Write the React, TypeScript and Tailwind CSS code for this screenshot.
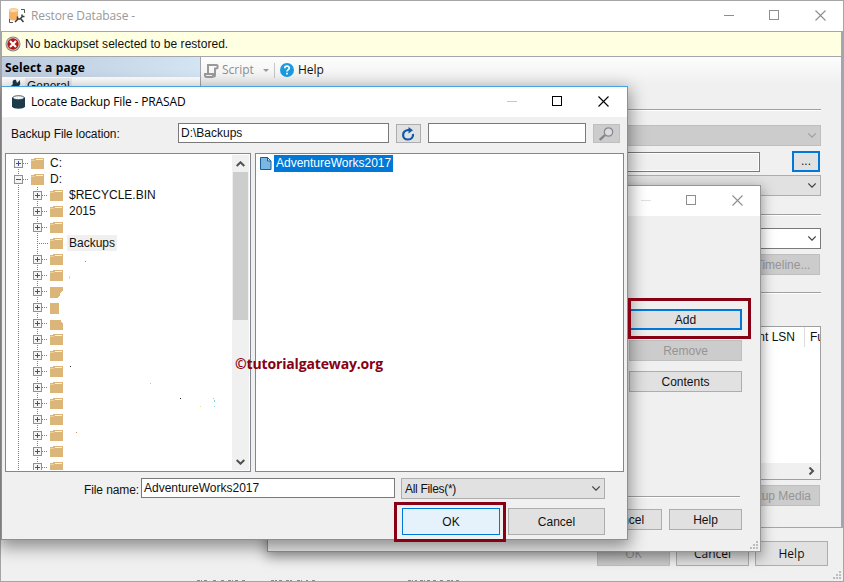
import type { ReactNode } from 'react'
import clsx from 'clsx'

const SANS = "font-['Liberation_Sans',sans-serif]"
const UI = "font-['Open_Sans',sans-serif]"

const folders = [
  { name: '$RECYCLE.BIN' },
  { name: '2015' },
  { name: '' },
  { name: 'Backups', selected: true, leaf: true },
  { name: '' },
  { name: '' },
  { name: '', shape: 'M50 4h13v3l-3 3v2l-2 3h-8z' },
  { name: '', shape: 'M50 4h9v11h-9z' },
  { name: '', shape: 'M50 5h11v2l2 2v6h-13z' },
  { name: '' },
  { name: '' },
  { name: '' },
  { name: '' },
  { name: '' },
  { name: '' },
  { name: '' },
  { name: '' },
  { name: '' },
]

export default function App() {
  return (
    <div className={clsx('relative w-[844px] h-[582px] overflow-hidden text-xs leading-4 text-[#111]', SANS)}>
      <RestoreWindow />
      <DeviceDialog />
      <LocateDialog />
      <div className="absolute left-[628px] top-[298px] w-[123px] h-[41px] border-3 border-[#870014]" />
      <div className="absolute left-[394px] top-[502px] w-[112px] h-[40px] border-3 border-[#870014]" />
      <div className="absolute left-[235px] top-[354px] whitespace-nowrap font-['Open_Sans',sans-serif] font-bold text-[14px] leading-5 tracking-[-0.15px] text-[#870014]">
        ©tutorialgateway.org
      </div>
    </div>
  )
}

function RestoreWindow() {
  return (
    <div className="w-[844px] h-[582px] flex flex-col bg-[#f0f0f0] border border-[#a5a5a8]">
      <div className="h-[31px] shrink-0 flex items-center bg-white border-b border-[#a5a5ad]">
        <RestoreIcon />
        <span className={clsx('ml-[5px] text-[#999] tracking-[-0.1px]', UI)}>Restore Database -</span>
        <WindowButtons className="ml-auto mr-[17px] mb-[1px]" color="#8e8e8e" minColor="#8e8e8e" />
      </div>
      <div className="h-[496px] shrink-0 flex flex-col border-l border-r-2 border-b border-[#a5a5ad]">
        <div className="h-[25px] shrink-0 flex items-center bg-[#ffffe1] border-b border-[#a5a5ad]">
          <ErrorIcon />
          <span className="ml-[4px] tracking-[0.03px]">No backupset selected to be restored.</span>
        </div>
        <div className="flex flex-1 min-h-0">
          <div className="w-[199px] shrink-0 bg-white border-r border-[#a5a5ad]">
            <div className="h-5 pl-[3px] pt-[3px] bg-gradient-to-r from-[#bccbdd] to-[#d3e4f2] font-['Open_Sans',sans-serif] font-bold tracking-[0.15px] text-black">
              Select a page
            </div>
            <div className="flex h-5 pl-[7px] pt-[1px]">
              <WrenchIcon />
              <span className="ml-[4px] h-4 px-[2px] bg-[#f0f0f0]">General</span>
            </div>
          </div>
          <div className="flex-1 min-w-0 flex flex-col">
            <div className={clsx('h-[26px] shrink-0 flex items-center px-[3px] bg-gradient-to-b from-[#fdfdfd] to-[#f0f0f0]', UI)}>
              <ScriptIcon />
              <span className="ml-[3px] text-[#8e8e8e]">Script</span>
              <svg width="6" height="3" className="ml-[9px]">
                <path d="M0 0h6L3 3z" fill="#999" />
              </svg>
              <div className="ml-[5px] mr-[5px] w-px h-[15px] bg-[#c5c5c5]" />
              <HelpIcon />
              <span className="ml-[4px]">Help</span>
            </div>
            <RestoreForm />
          </div>
        </div>
      </div>
      <div className="relative flex-1 flex justify-end items-start gap-[6px] pt-[13px] pr-[15px] text-[12px]">
        <Button className={clsx('w-[73px] h-[25px]', UI)} disabled>OK</Button>
        <Button className={clsx('w-[73px] h-[25px]', UI)}>Cancel</Button>
        <Button className={clsx('w-[73px] h-[25px]', UI)}>Help</Button>
        <Grip className="absolute right-[2px] bottom-[2px]" />
        <svg width="320" height="2" className="absolute left-[194px] bottom-0" stroke="#8c8c8c">
          <path
            d="M2 1.5h5m2 0h3m6 0h4m4 0h3m4 0h5m2 0h3m4 0h3M76 1.5h6m2 0h4m3 0h6m5 0h5m4 0h2m4 0h4M213 1.5h5m2 0h2m3 0h5m2 0h4m2 0h4m3 0h4m3 0h6m3 0h4"
            strokeDasharray="3 1"
            fill="none"
          />
        </svg>
      </div>
    </div>
  )
}

function RestoreForm() {
  return (
    <div className="flex flex-col items-end pr-[20px] pt-[26px]">
      <Rule className="w-[600px]" />
      <div className="mt-[14px] w-[600px] h-[21px] flex items-center justify-end pr-[4px] bg-[#ccc] border border-[#bfbfbf]">
        <Chevron color="#a0a0a0" />
      </div>
      <div className="mt-[5px] flex items-center pr-px">
        <div className="w-[540px] h-[20px] bg-[#f0f0f0] border border-[#7a7a7a] shadow-[inset_0_0_0_1px_#fff]" />
        <div className="ml-[32px] w-[28px] h-[21px] flex items-end justify-center pb-[1px] bg-[#e1e1e1] border-2 border-[#0078d7]">
          ...
        </div>
      </div>
      <div className="mt-[3px] w-[600px] h-[21px] flex items-center justify-end pr-[4px] bg-[#e1e1e1] border border-[#adadad]">
        <Chevron />
      </div>
      <Rule className="mt-[18px] w-[600px]" />
      <div className="mt-[12px] w-[600px] h-[21px] flex items-center justify-end pr-[4px] bg-white border border-[#7a7a7a]">
        <Chevron />
      </div>
      <Button className="mt-[5px] mr-px w-[74px] h-[21px]" disabled>Timeline...</Button>
      <Rule className="mt-[17px] w-[600px]" />
      <div className="mt-[32px] w-[600px] h-[154px] flex flex-col bg-white border border-[#a0a0a0]">
        <div className="h-[20px] flex justify-end text-[12px]">
          <span className="pr-[9px] pt-px border-r border-[#ddd] leading-[18px]">Checkpoint LSN</span>
          <span className="w-[15px] pl-[5px] pt-px leading-[18px] overflow-hidden whitespace-nowrap">Full LSN</span>
        </div>
        <div className="flex-1" />
        <div className="h-[16px] flex items-center justify-end pr-[5px] bg-[#f0f0f0]">
          <svg width="7" height="8" fill="none" stroke="#505050" strokeWidth="2">
            <path d="M1.5 .5 5 4 1.5 7.5" />
          </svg>
        </div>
      </div>
      <Button className="mt-[5px] mr-px w-[136px] h-[21px] justify-end! pr-[8px]" disabled>Verify Backup Media</Button>
    </div>
  )
}

function DeviceDialog() {
  return (
    <div className="absolute left-[267px] top-[185px] w-[494px] h-[367px] flex flex-col bg-[#f0f0f0] border border-[#959595] shadow-[0_4px_12px_1px_rgba(0,0,0,0.38)]">
      <div className="h-[30px] shrink-0 flex items-center justify-end pr-[17px] bg-white">
        <WindowButtons className="mb-[1px]" color="#8e8e8e" minColor="#e0e0e0" />
      </div>
      <div className="flex flex-col items-end pt-[93px] pr-[18px] gap-[10px]">
        <div className="w-[113px] h-[21px] flex items-center justify-center bg-[#e1e1e1] border-2 border-[#0078d7]">
          Add
        </div>
        <Button className="w-[113px] h-[21px]" disabled>Remove</Button>
        <Button className="w-[113px] h-[21px]">Contents</Button>
      </div>
      <div className="mt-auto pb-[21px] pr-[18px] flex flex-col items-end">
        <Rule className="w-[440px] mr-[2px]" />
        <div className="mt-[11px] flex gap-[7px]">
          <Button className="w-[73px] h-[21px]">Cancel</Button>
          <Button className="w-[73px] h-[21px]">Help</Button>
        </div>
      </div>
      <Grip className="absolute right-[2px] bottom-[2px]" />
    </div>
  )
}

function LocateDialog() {
  return (
    <div className="absolute left-px top-[86px] w-[627px] h-[454px] flex flex-col bg-[#f0f0f0] border border-[#46a3e0] shadow-[0_5px_16px_2px_rgba(0,0,0,0.42)]">
      <div className="h-[30px] shrink-0 flex items-center bg-white">
        <DatabaseIcon />
        <span className={clsx('ml-[6px] tracking-[-0.15px] text-black', UI)}>Locate Backup File - PRASAD</span>
        <WindowButtons className="ml-auto mr-[18px] mb-[1px]" color="#000" minColor="#c8c8c8" />
      </div>

      <div className="h-[36px] shrink-0 flex items-start pt-[6px] pl-[9px]">
        <span className="w-[167px] pt-[3px] tracking-[-0.1px]">Backup File location:</span>
        <div className="w-[211px] h-[20px] px-[2px] bg-white border border-[#7a7a7a] leading-[18px]">D:\Backups</div>
        <div className="ml-[7px] mt-px w-[25px] h-[19px] flex items-center justify-center bg-[#e1e1e1] border border-[#adadad]">
          <RefreshIcon />
        </div>
        <div className="ml-[7px] w-[158px] h-[20px] bg-white border border-[#7a7a7a]" />
        <div className="ml-[7px] mt-px w-[27px] h-[19px] flex items-center justify-center bg-[#ccc] border border-[#bfbfbf]">
          <SearchIcon />
        </div>
      </div>

      <div className="flex h-[319px] shrink-0 pl-[3px] gap-[4px]">
        <div className="w-[246px] flex bg-white border border-[#828790] py-px">
          <FolderTree />
          <TreeScrollbar />
        </div>
        <div className="w-[369px] flex items-start bg-white border border-[#828790] pt-px pl-[3px]">
          <FileIcon />
          <span className="ml-[2px] h-[17px] px-[2px] bg-[#0078d7] text-white leading-[17px]">AdventureWorks2017</span>
        </div>
      </div>

      <div className="flex items-start pt-[6px] pl-[82px]">
        <span className="w-[57px] pt-[4px] tracking-[-0.1px]">File name:</span>
        <div className="w-[254px] h-[20px] px-[2px] bg-white border border-[#7a7a7a] leading-[18px]">AdventureWorks2017</div>
        <div className="ml-[6px] w-[204px] h-[21px] flex items-center justify-between pl-[3px] pr-[4px] bg-[#e1e1e1] border border-[#adadad]">
          <span className="tracking-[-0.3px]">All Files(*)</span>
          <Chevron />
        </div>
      </div>

      <div className="mt-[9px] pr-[22px] flex justify-end gap-[8px]">
        <div className="w-[98px] h-[27px] flex items-center justify-center bg-[#e5f1fb] border border-[#0078d7]">OK</div>
        <Button className="w-[97px] h-[27px]">Cancel</Button>
      </div>
    </div>
  )
}

function FolderTree() {
  return (
    <div className="relative flex-1 overflow-hidden">
      <TreeRow name="C:" root first />
      <TreeRow name="D:" root open />
      {folders.map((folder, index) => (
        <TreeRow key={index} {...folder} />
      ))}
      {/* leftover specks in the blanked out names */}
      <svg width="226" height="315" className="absolute left-0 top-0">
        <path d="M79 106h1v1h-1zM70 277h1v1h-1z" fill="#c98a4b" />
        <path d="M63 121h1v3h-1zM194 251h1v1h-1z" fill="#f0d890" />
        <path d="M64 211h1v1h-1zM174 243h1v1h-1z" fill="#222" />
        <path d="M144 228h1v1h-1zM207 243h1v1h-1zM208 245h1v2h-1zM208 251h1v1h-1z" fill="#7fd6ea" />
      </svg>
    </div>
  )
}

type TreeRowProps = {
  name: string
  root?: boolean
  first?: boolean
  open?: boolean
  leaf?: boolean
  selected?: boolean
  shape?: string
}

function TreeRow({ name, root, first, open, leaf, selected, shape }: TreeRowProps) {
  const offset = root ? 0 : 19
  return (
    <div className="flex h-4">
      <svg width={root ? 41 : 60} height="16" viewBox={root ? '6 0 41 16' : '6 0 60 16'} className="shrink-0" shapeRendering="crispEdges">
        <g stroke="#808080" strokeDasharray="1 1">
          <path d={first ? 'M18.5 8v8' : 'M18.5 0v16'} />
          {!root && <path d="M37.5 0v16" />}
          <path d={`M${(leaf ? 18 : 23) + offset} 8.5H${29 + offset}`} />
        </g>
        {!leaf && (
          <g transform={`translate(${offset} 0)`}>
            <rect x="14.5" y="4.5" width="8" height="8" fill="#f4f4f4" stroke="#919191" />
            <path d={open ? 'M16 8.5h5' : 'M16 8.5h5M18.5 6v5'} stroke="#3355a8" />
          </g>
        )}
        {shape ? (
          <path d={shape} fill="#dcb679" />
        ) : (
          <g transform={`translate(${offset} 0)`}>
            <path d="M31 4h3V3h10v11H31z" fill="#dcb679" />
            <path d="M36 4.5h7" stroke="#fbf2df" />
            <path d="M31 5.5h4" stroke="#ead09f" />
          </g>
        )}
      </svg>
      {name && (
        <span className={clsx('ml-px px-[2px] whitespace-nowrap', selected && 'bg-[#f0f0f0]')}>{name}</span>
      )}
    </div>
  )
}

function TreeScrollbar() {
  return (
    <div className="w-[17px] flex flex-col items-center bg-[#f0f0f0] mr-px">
      <div className="h-[17px] flex items-center">
        <svg width="9" height="6" fill="none" stroke="#505050" strokeWidth="2">
          <path d="M.7 5 4.5 1.3 8.3 5" />
        </svg>
      </div>
      <div className="w-[15px] h-[148px] bg-[#cdcdcd]" />
      <div className="flex-1" />
      <div className="h-[17px] flex items-center">
        <svg width="9" height="6" fill="none" stroke="#505050" strokeWidth="2">
          <path d="M.7 1 4.5 4.7 8.3 1" />
        </svg>
      </div>
    </div>
  )
}

function Button({ children, className, disabled }: { children: ReactNode; className?: string; disabled?: boolean }) {
  return (
    <div
      className={clsx(
        'flex items-center justify-center whitespace-nowrap border',
        disabled ? 'bg-[#ccc] border-[#bfbfbf] text-[#959595]' : 'bg-[#e1e1e1] border-[#adadad]',
        className,
      )}
    >
      {children}
    </div>
  )
}

function Rule({ className }: { className?: string }) {
  return <div className={clsx('h-[2px] shrink-0 bg-white border-t border-[#a0a0a0]', className)} />
}

function WindowButtons({ className, color, minColor }: { className?: string; color: string; minColor: string }) {
  return (
    <svg width="102" height="11" viewBox="0 0 102 11" className={className} fill="none" stroke={color}>
      <path d="M0 5.5h10" stroke={minColor} />
      <rect x="45.5" y=".5" width="9" height="9" />
      <path d="m91.5.5 10 10m0-10-10 10" strokeWidth="1.1" />
    </svg>
  )
}

function Chevron({ color = '#444' }: { color?: string }) {
  return (
    <svg width="8" height="5" viewBox="0 0 8 5" fill="none" stroke={color} strokeWidth="1.2">
      <path d="M.3.5 4 4.2 7.7.5" />
    </svg>
  )
}

function Grip({ className }: { className?: string }) {
  return (
    <svg width="8" height="8" className={className} fill="#bdbdbd">
      <path d="M6 0h2v2H6zM3 3h2v2H3zM6 3h2v2H6zM0 6h2v2H0zM3 6h2v2H3zM6 6h2v2H6z" />
    </svg>
  )
}

function RestoreIcon() {
  return (
    <svg width="17" height="16" viewBox="0 0 17 16" className="ml-[8px]" fill="none">
      <path d="M0 2.5v8C1 13 8 13 9 10.500v-8z" fill="#f6b162" />
      <ellipse cx="4.500" cy="2.500" rx="4.500" ry="2" fill="#fbdcae" stroke="#f6b162" strokeWidth=".7" />
      <path d="M12 1.500h3.500V5M.5 11v3.500H4" stroke="#555" />
      <path d="m6 14 3-3M8.500 8.500v2.500h2.500M11.500 10.500l3 3.500M11 11l3-3M13 6.500v2h2.500" stroke="#3b3b3b" strokeWidth="1.500" />
    </svg>
  )
}

function ErrorIcon() {
  return (
    <svg width="16" height="16" viewBox="0 0 16 16" className="ml-[3px]">
      <circle cx="8" cy="8" r="7.500" fill="#85858a" />
      <circle cx="8" cy="8" r="6.500" fill="#d9d5d2" />
      <circle cx="8" cy="8" r="5.700" fill="#b31814" />
      <path d="m5 5 6 6m0-6-6 6" stroke="#fff" strokeWidth="2.200" />
    </svg>
  )
}

function WrenchIcon() {
  return (
    <svg width="12" height="12" viewBox="0 0 12 12" className="mt-[1px]">
      <path d="M11 1 8 4 7 1C4 0 3 3 4 5L0 9l2 3 5-5c3 1 5-1 4-4z" fill="#1c3a4a" />
    </svg>
  )
}

function ScriptIcon() {
  return (
    <svg width="15" height="15" viewBox="0 0 15 15" fill="none" stroke="#9a9a9a" strokeWidth="2">
      <path d="M4 10V2h8.500c1.500 0 1.500 3.500 0 3.500H11V12c0 2-2 2-2 0v-1H1v1.500c0 1.200 1 1.500 2 1.500h6" />
    </svg>
  )
}

function HelpIcon() {
  return (
    <svg width="14" height="14" viewBox="0 0 14 14">
      <circle cx="7" cy="7" r="7" fill="#1a9be0" />
      <path d="M4.700 5.300c0-3 4.600-2.800 4.600-.3C9.300 6.700 7 6.700 7 8.600" fill="none" stroke="#fff" strokeWidth="1.700" />
      <path d="M6.100 9.800h1.800v1.700H6.100z" fill="#fff" />
    </svg>
  )
}

function DatabaseIcon() {
  return (
    <svg width="13" height="14" viewBox="0 0 13 14" className="ml-[10px]">
      <path d="M0 2.500v9C1 14.500 12 14.500 13 11.500v-9z" fill="#1c3a4a" />
      <ellipse cx="6.500" cy="2.700" rx="5.700" ry="2" fill="#f2f4f5" stroke="#1c3a4a" strokeWidth=".8" />
    </svg>
  )
}

function RefreshIcon() {
  return (
    <svg width="13" height="14" viewBox="0 0 13 14">
      <path d="M7 3H6C-.5 4-.5 12.500 6 12.500c3.500 0 5.500-2.500 5-5.500" fill="none" stroke="#0f58a8" strokeWidth="2.200" />
      <path d="M6.500 0 11 3.200 6.500 6.500z" fill="#0f58a8" />
    </svg>
  )
}

function SearchIcon() {
  return (
    <svg width="15" height="14" viewBox="0 0 15 14" fill="none">
      <path d="M.8 13 6 8" stroke="#84848e" strokeWidth="2.400" />
      <circle cx="9.500" cy="5" r="4.200" fill="#dcdcdf" stroke="#888890" strokeWidth="1.200" />
    </svg>
  )
}

function FileIcon() {
  return (
    <svg width="12" height="13" viewBox="0 0 12 13" className="mt-[2px] ml-px">
      <path d="M.5.5h7l3.500 3.500v8.500H.5z" fill="#79b8e0" stroke="#1d5c99" />
      <path d="M7.500.5V4H11z" fill="#d3e9f7" stroke="#1d5c99" />
    </svg>
  )
}
